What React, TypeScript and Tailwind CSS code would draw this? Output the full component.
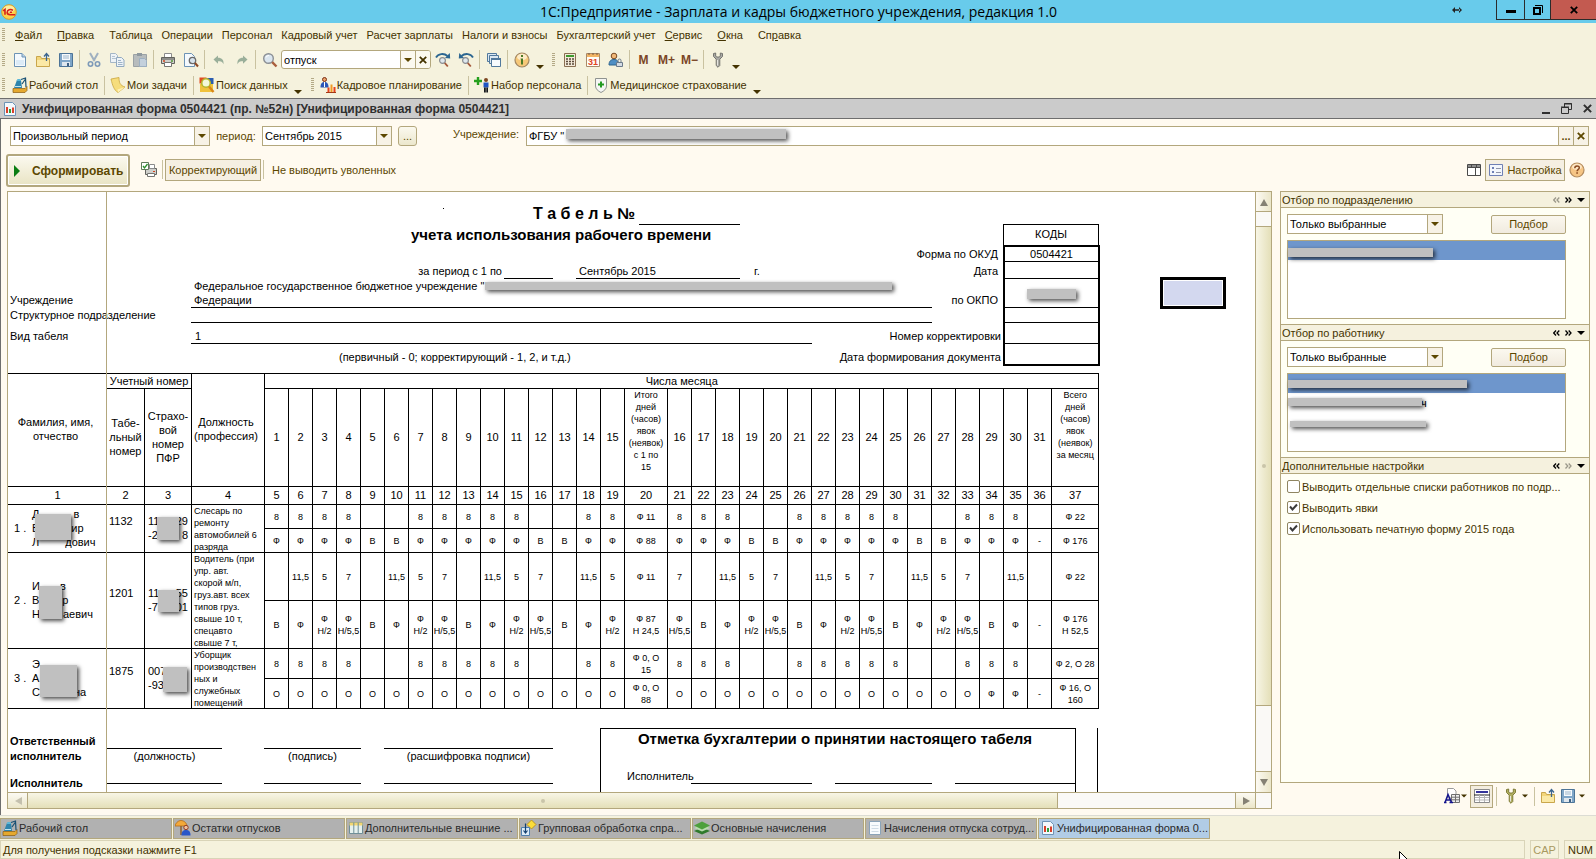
import { Fragment, type ReactNode } from "react";
import clsx from "clsx";

/* ---------- icons ---------- */

function Svg({ children, w = 16, h = 16, box }: { children: ReactNode; w?: number; h?: number; box?: string }) {
    return (
        <svg width={w} height={h} viewBox={box ?? `0 0 ${w} ${h}`} fill="none" className="shrink-0" aria-hidden="true">
            {children}
        </svg>
    );
}

const LogoIcon = () => (
    <Svg>
        <circle cx="8" cy="8" r="7.3" fill="#fbd24a" stroke="#d99a2b" />
        <ellipse cx="8" cy="5" rx="5.5" ry="3.4" fill="#fdeea0" />
        <path d="M2.2 6.8 4 5.4v5.4M12 6.3C9.500 4.600 6.200 5.800 6.200 8.200c0 2 1.500 2.500 3 2.500h5M11 8.200H8.800" stroke="#d6201c" strokeWidth="1.600" />
    </Svg>
);
const NewIcon = () => (
    <Svg>
        <path d="M2.500 1.500h7.500l3.500 3.500v9.500h-11z" fill="#f4f9fd" stroke="#6d93b5" />
        <path d="M4 8h8v5H4z" fill="#dcebf7" />
        <path d="M10 1.500V5h3.500" fill="#b9d2e8" stroke="#6d93b5" />
    </Svg>
);
const OpenIcon = () => (
    <Svg>
        <path d="M1.500 14.500v-10h4l1 2h8v8z" fill="#f3d67a" stroke="#c9a64c" />
        <path d="M2 14v-6h12v6z" fill="#fbe9a6" />
        <path d="M11.500 9V2M9 4.500 11.500 1.500 14 4.500" stroke="#3b6590" strokeWidth="1.300" />
    </Svg>
);
const SaveIcon = () => (
    <Svg>
        <path d="M1.500 1.500h13v13h-13z" fill="#7fa6c8" stroke="#4d7497" />
        <path d="M4 2h8v6H4z" fill="#f5f9fc" />
        <path d="M5 4h6M5 6h6" stroke="#9db6cb" />
        <path d="M4 10h8v4H4z" fill="#dfe7ee" />
        <path d="M9 11h2v3H9z" fill="#3f6183" />
    </Svg>
);
const CutIcon = () => (
    <Svg>
        <path d="m4 1 4.500 8M12 1 7.500 9" stroke="#9fb0c0" strokeWidth="2" />
        <circle cx="4.500" cy="12" r="2.200" stroke="#7e9ab8" strokeWidth="1.600" />
        <circle cx="11.500" cy="12" r="2.200" stroke="#7e9ab8" strokeWidth="1.600" />
    </Svg>
);
const CopyIcon = () => (
    <Svg>
        <path d="M1.500 1.500h5l2 2v7h-7z" fill="#eef3f7" stroke="#a4b6c6" />
        <path d="M3 4.500h3M3 6.500h4" stroke="#b4c4d2" />
        <path d="M7.500 5.500h5l2.500 2.500v6.500H7.500z" fill="#eef3f7" stroke="#91a9bf" />
        <path d="M9 8.500h3M9 10.500h4.500M9 12.500h4.500" stroke="#9db3c8" />
    </Svg>
);
const PasteIcon = () => (
    <Svg>
        <path d="M1.500 2.500h13v12h-13z" fill="#b7bcbd" stroke="#9ba2a5" />
        <path d="M5 1h5v3H5z" fill="#8f999f" />
        <path d="M7.500 6.500h5l2 2v6h-7z" fill="#c3d0dc" stroke="#9cafc1" />
    </Svg>
);
const PrintIcon = () => (
    <Svg>
        <path d="M4.500 1.500h7v4h-7z" fill="#fff" stroke="#8b8b8b" />
        <path d="M1.500 5.500h13v6h-13z" fill="#cfcfcb" stroke="#62625e" />
        <path d="M2 6h12v2H2z" fill="#8e8e8a" />
        <path d="M4.500 10.500h7v4h-7z" fill="#fff" stroke="#767672" />
        <path d="M3 9h2" stroke="#d6441c" strokeWidth="1.400" />
        <path d="M11 9h2" stroke="#4f9a35" strokeWidth="1.400" />
    </Svg>
);
const PreviewIcon = () => (
    <Svg>
        <path d="M1.500 1.500h7l3 3v10h-10z" fill="#f4f9fd" stroke="#6d93b5" />
        <circle cx="9.500" cy="8.500" r="3.200" fill="#d6e2ec" stroke="#6a6a6a" strokeWidth="1.300" />
        <path d="m12 11 3 3.500" stroke="#8f4a26" strokeWidth="2" />
    </Svg>
);
const UndoIcon = ({ flip }: { flip?: boolean }) => (
    <Svg>
        <g transform={flip ? "matrix(-1 0 0 1 16 0)" : undefined}>
            <path d="M2.500 7.500 7 3.500v2.300c4 0 6 2.200 5.500 6.500-1-2.500-2.500-3-5.500-3v2.400z" fill="#9aaf9a" />
        </g>
    </Svg>
);
const LensIcon = () => (
    <Svg>
        <circle cx="6.500" cy="6.500" r="4.800" fill="#dbe6ef" stroke="#8b8f94" strokeWidth="1.400" />
        <path d="M4 5.500a3 3 0 0 1 3-2" stroke="#fff" />
        <path d="m10.200 10.200 4.300 4.300" stroke="#a95e3c" strokeWidth="2.400" />
    </Svg>
);
const FindIcon = ({ flip }: { flip?: boolean }) => (
    <Svg>
        <g transform={flip ? "matrix(-1 0 0 1 16 0)" : undefined}>
            <path d="M1 5.500C3 1.500 9 .8 12.500 4" stroke="#2c6691" strokeWidth="1.800" />
            <path d="m14.800 1 .4 5.500-5.200-.6z" fill="#2c6691" />
        </g>
        <circle cx="7.500" cy="8.500" r="2.900" fill="#dfe8ee" stroke="#8a8d91" strokeWidth="1.200" />
        <path d="m9.800 11 3 3.500" stroke="#a4583a" strokeWidth="1.900" />
    </Svg>
);
const WindowsIcon = () => (
    <Svg>
        <path d="M1.500 1.500h9v8h-9z" fill="#dbe8f2" stroke="#51799d" />
        <path d="M3.500 3.500h9v8h-9z" fill="#dbe8f2" stroke="#51799d" />
        <path d="M5.500 6.500h9v8h-9z" fill="#f7fbfe" stroke="#51799d" />
        <path d="M5 6h10v2H5z" fill="#51799d" />
    </Svg>
);
const InfoIcon = () => (
    <Svg>
        <circle cx="8" cy="8" r="7" fill="#f6c878" stroke="#a18763" strokeWidth="1.200" />
        <ellipse cx="8" cy="5" rx="5" ry="3.300" fill="#fdebc7" />
        <path d="M7 3h2v2H7zM6.500 6.500H9v6H7v-5h-.5z" fill="#4b7a26" />
    </Svg>
);
const CalcIcon = () => (
    <Svg>
        <path d="M2.500 1.500h11v13h-11z" fill="#f3ead9" stroke="#8a6f52" />
        <path d="M4 3h8v2H4z" fill="#3f9a2e" />
        <path d="M4 7h2M7 7h2M10 7h2M4 9.500h2M7 9.500h2M10 9.500h2M4 12h2M7 12h2M10 12h2" stroke="#5b4a3a" strokeWidth="1.300" />
    </Svg>
);
const CalendarIcon = () => (
    <Svg>
        <path d="M1.500 1.500h13v13h-13z" fill="#fffdf8" stroke="#a98a6a" />
        <path d="M2 2h12v3H2z" fill="#f2b566" />
        <path d="M4 1v2M8 1v2M12 1v2" stroke="#7d5a3a" />
        <text x="8" y="13" textAnchor="middle" fontSize="9" fontWeight="700" fill="#e0431d" fontFamily="Liberation Sans">31</text>
    </Svg>
);
const UserIcon = () => (
    <Svg>
        <circle cx="6" cy="4" r="2.800" fill="#f1b878" stroke="#7a4a22" />
        <path d="M1 13c0-4 2-5.500 5-5.500s4.500 1.500 4.500 5.500z" fill="#4f8fc4" stroke="#2f658f" />
        <path d="M8.500 10.500h6v4h-6z" fill="#d5dde5" stroke="#6b7a8a" />
        <path d="M10 10V8.500a1.500 1.500 0 0 1 3 0V10" stroke="#6b7a8a" />
    </Svg>
);
const WrenchIcon = ({ color = "#a9a9a4", edge = "#6c6c66" }: { color?: string; edge?: string }) => (
    <Svg>
        <path d="M3.500 1.500v3L6.200 7.200v6.300l1.800 1.800 1.800-1.800V7.200l2.700-2.700v-3L10.300 1v3l-1 1H6.700l-1-1V1z" fill={color} stroke={edge} strokeWidth=".9" />
        <path d="M7.500 8v5.500" stroke="#e5e5df" />
    </Svg>
);
const DesktopIcon = () => (
    <Svg>
        <path d="M1 11.500h12l2-2v4l-2 2H1z" fill="#e5a92f" stroke="#8a5c11" strokeWidth=".7" />
        <path d="M2 11 5 3h4l1 8z" fill="#2d84ad" />
        <path d="m4.500 4 1-2h3l.5 2z" fill="#5ab7d8" />
        <path d="M9 2.500 13.500 1l.5 9M10 7l3.500-5" stroke="#174f73" strokeWidth="1.200" />
        <path d="M3 9.500h6" stroke="#bfe4ef" />
    </Svg>
);
const NoteIcon = () => (
    <Svg>
        <path d="m1 2 8-1.500c0 5 1 8 6 9.500l-7 5.500C4 13 2.500 8.500 1 2z" fill="#f6dd7c" stroke="#c9a63f" strokeWidth=".8" />
        <path d="m8 15.500-.5-3L15 10z" fill="#fff0b3" />
    </Svg>
);
const DataSearchIcon = () => (
    <Svg>
        <path d="M.5.500h7v6h-7z" fill="#e04a1f" />
        <path d="M7 1h7.500v6H7z" fill="#2a5db0" />
        <path d="M1 7h13v8H1z" fill="#f0c23c" />
        <circle cx="7" cy="6" r="4.300" fill="#f3f8d8" stroke="#b5b62b" strokeWidth="1.600" />
        <path d="m10 9.500 4.500 5.500" stroke="#d98716" strokeWidth="2.400" />
    </Svg>
);
const PlanIcon = () => (
    <Svg>
        <circle cx="4.500" cy="2.500" r="2" fill="#e9a36b" stroke="#7c2c12" />
        <path d="M.5 10.500c0-4 1.500-5.500 4-5.500s4 1.500 4 5.500z" fill="#2a56b8" />
        <path d="M4 5h1v5H4z" fill="#fff" />
        <path d="M7.500 10.500h2V15h-2z" fill="#e8431c" />
        <path d="M10.500 7.500h2V15h-2z" fill="#f09a22" />
        <path d="M13.500 10h2v5h-2z" fill="#e8431c" />
        <path d="M6 15.500h10" stroke="#a33a16" />
    </Svg>
);
const RecruitIcon = () => (
    <Svg>
        <path d="M4 0v8M0 4h8" stroke="#25a01c" strokeWidth="2.400" />
        <circle cx="12" cy="3" r="2" fill="#7c4620" />
        <path d="M9.500 5.500h5v5h-5z" fill="#1e54c4" />
        <path d="M10 10.500h1.800v5H10zM12.300 10.500H14v5h-1.700z" fill="#16181c" />
    </Svg>
);
const ShieldIcon = () => (
    <Svg>
        <path d="M2.500 1.500h11V9c0 3-2.500 5-5.500 6.500C5 14 2.500 12 2.500 9z" fill="#f5f6f4" stroke="#8f9390" />
        <path d="M8 4.500v6M5 7.500h6" stroke="#239a22" strokeWidth="2" />
    </Svg>
);
const ReportIcon = () => (
    <Svg>
        <path d="M2.500 1.500h8l3 3v10h-11z" fill="#f3f8fc" stroke="#6d93b5" />
        <path d="M4 6h2v6H4z" fill="#d9402a" />
        <path d="M7 8h2v4H7z" fill="#2f9e3a" />
        <path d="M10 6.500h2V12h-2z" fill="#d9402a" />
    </Svg>
);
const PrintCheckIcon = () => (
    <Svg>
        <path d="M4.500 6.500h11v6h-11z" fill="#cfcfcb" stroke="#62625e" />
        <path d="M8.500 2.500h5v4h-5z" fill="#fff" stroke="#8b8b8b" />
        <path d="M6.500 11.500h7v3h-7z" fill="#fff" stroke="#767672" />
        <path d="M.5.500h7v7h-7z" fill="#fff" stroke="#5f7a5a" />
        <path d="M2 4l1.500 2L6.500 2" stroke="#2b8f2b" strokeWidth="1.300" />
        <path d="M12 9.500h2" stroke="#d6441c" />
    </Svg>
);
const TableIcon = () => (
    <Svg>
        <path d="M1.500 2.500h13v11h-13z" fill="#fff" stroke="#4a4a4a" />
        <path d="M2 3h12v2H2z" fill="#8d8d8d" />
        <path d="M5.500 2.500v3M10.500 2.500v3M1.500 5.500h13M9.500 5.500v8" stroke="#4a4a4a" />
    </Svg>
);
const SettingsListIcon = () => (
    <Svg>
        <path d="M1.500 2.500h13v11h-13z" fill="#f3f6fc" stroke="#6f80b5" />
        <path d="M4 5h2v2H4zM4 9h2v2H4z" fill="#6f80b5" />
        <path d="M8 6.500h5M8 10.500h5" stroke="#8e93a8" />
    </Svg>
);
const HelpIcon = () => (
    <Svg>
        <circle cx="8" cy="8" r="7" fill="#f6c585" stroke="#b48c5e" strokeWidth="1.200" />
        <ellipse cx="8" cy="4.800" rx="5" ry="3" fill="#fde6c4" />
        <path d="M5.800 6.200c0-3 4.500-2.800 4.500-.4 0 1.700-2.200 1.500-2.200 3.500M7.300 11h1.600" stroke="#8a4b21" strokeWidth="1.500" />
    </Svg>
);
const TypefaceIcon = () => (
    <Svg>
        <path d="M3.500.500h6l2.500 2.500v7h-8.500z" fill="#fff" stroke="#9a9a9a" />
        <path d="M7.500 6.500h8v8h-8z" fill="#efefef" stroke="#6f6f6f" />
        <path d="M7.500 9.200h8M7.500 11.800h8M11.500 6.500v8" stroke="#6f6f6f" />
        <path d="m1 14.500 3-8 3.500 8M2 12h4M0 14.500h2.500M5.500 14.500H9" stroke="#14148c" strokeWidth="1.500" />
    </Svg>
);
const GridIcon = () => (
    <Svg>
        <path d="M.5 1.500h15v13H.5z" fill="#fff" stroke="#8a8a8a" />
        <path d="M2 3h12v2H2z" fill="#34349a" />
        <path d="M0 7h16" stroke="#222" />
        <path d="M1 9.500h14M1 12h14M5.500 7v7M10.500 7v7" stroke="#b5b5b5" />
    </Svg>
);
const VacationIcon = () => (
    <Svg>
        <path d="M0 6C1 2 4 .5 6 .5S11.500 2 12 6z" fill="#f3a93a" stroke="#b06a17" strokeWidth=".8" />
        <path d="M6 6v9" stroke="#8a5a2a" strokeWidth="1.400" />
        <circle cx="11" cy="7.500" r="2.200" fill="#f0c09a" stroke="#8c2f1a" strokeWidth=".9" />
        <path d="M6.500 15.500c0-4 1.500-5.500 4.500-5.500s4.500 1.500 4.500 5.500z" fill="#2a56c8" />
    </Svg>
);
const ColumnsIcon = () => (
    <Svg>
        <path d="M1.500 2.500h13v11h-13z" fill="#e6f1ee" stroke="#6f8f98" />
        <path d="M1.500 2.500h13v3h-13z" fill="#f2d672" />
        <path d="M5.800 2.500v11M10.200 2.500v11" stroke="#6f8f98" />
    </Svg>
);
const BatchIcon = () => (
    <Svg>
        <path d="M10.500 0 15 4.500 10.500 9 6 4.500z" fill="#fbdc3a" stroke="#b48a12" strokeWidth=".8" />
        <path d="M.5 7.500h8v8h-8z" fill="#dcebf7" stroke="#4f7fae" />
        <path d="M4.500 3.500v9M2.500 10.500l2 2.500 2-2.500" stroke="#123f70" strokeWidth="1.200" />
    </Svg>
);
const LayersIcon = () => (
    <Svg>
        <path d="m0 11 8-3.500L16 11l-8 3.500z" fill="#2f7a2c" />
        <path d="m0 8 8-3.500L16 8l-8 3.500z" fill="#b8dcae" />
        <path d="m0 5.500 8-4 8 4-8 4z" fill="#4da03c" />
    </Svg>
);
const DocIcon = () => (
    <Svg>
        <path d="M2.500 1.500h11v13h-11z" fill="#f8fbfd" stroke="#8aa3b8" />
        <path d="M4.500 5.500h7M4.500 8.500h7M4.500 11.500h7" stroke="#cfdbe5" />
    </Svg>
);
const Caret = ({ className = "text-[#443300]" }: { className?: string }) => (
    <svg width="8" height="4" viewBox="0 0 8 4" className={clsx("shrink-0", className)} aria-hidden="true">
        <path d="M0 0h8L4 4z" fill="currentColor" />
    </svg>
);
const Cross = ({ size = 8 }: { size?: number }) => (
    <svg width={size} height={size} viewBox="0 0 8 8" aria-hidden="true">
        <path d="m.8.8 6.400 6.400M7.200.8.800 7.200" stroke="currentColor" strokeWidth="1.800" />
    </svg>
);

/* ---------- toolbar pieces ---------- */

const Grip = () => (
    <span className="mr-[3px] ml-[2px] h-[14px] w-[3px] shrink-0 bg-[repeating-linear-gradient(#b3a986_0_1px,transparent_1px_2px)]" />
);
const Sep = () => <span className="mx-[2px] h-[19px] w-px shrink-0 bg-[#c9c2a0]" />;

function ToolButton({ label, children }: { label: string; children: ReactNode }) {
    return (
        <button type="button" title={label} aria-label={label} className="flex h-5 w-[23px] shrink-0 items-center justify-center">
            {children}
        </button>
    );
}

function More() {
    return (
        <button type="button" aria-label="Еще" className="flex h-5 w-[13px] shrink-0 items-end justify-center pb-px">
            <Caret />
        </button>
    );
}

function Combo({ label, value, className }: { label: string; value: string; className: string }) {
    return (
        <div className={clsx("relative flex h-5 shrink-0 border border-[#b3a77d] bg-white", className)}>
            <select aria-label={label} className="w-full appearance-none bg-white pl-[2px] text-black outline-none">
                <option>{value}</option>
            </select>
            <span className="pointer-events-none flex w-[15px] shrink-0 items-center justify-center border-l border-[#b3a77d] bg-[#f7f2e6]">
                <Caret className="text-[#5c4700]" />
            </span>
        </div>
    );
}

/* ---------- data ---------- */

const menu: { name: string; key?: number }[] = [
    { name: "Файл", key: 0 },
    { name: "Правка", key: 0 },
    { name: "Таблица" },
    { name: "Операции" },
    { name: "Персонал" },
    { name: "Кадровый учет" },
    { name: "Расчет зарплаты" },
    { name: "Налоги и взносы" },
    { name: "Бухгалтерский учет" },
    { name: "Сервис", key: 0 },
    { name: "Окна", key: 0 },
    { name: "Справка", key: 2 },
];

const windows = [
    { name: "Рабочий стол", icon: DesktopIcon },
    { name: "Остатки отпусков", icon: VacationIcon },
    { name: "Дополнительные внешние ...", icon: ColumnsIcon },
    { name: "Групповая обработка спра...", icon: BatchIcon },
    { name: "Основные начисления", icon: LayersIcon },
    { name: "Начисления отпуска сотруд...", icon: DocIcon },
    { name: "Унифицированная форма 0...", icon: ReportIcon, active: true },
];

const days = Array.from({ length: 31 }, (_, i) => i + 1);
const isOff = (d: number) => [5, 6, 12, 13, 19, 20, 26, 27].includes(d);

const shiftTop = ["", "11,5", "5", "7"];
const shiftBottom = ["В", "Ф", "Ф\nН/2", "Ф\nН/5,5"];

const employees = [
    {
        no: 1,
        name: [["Д", "в"], ["В", "ир"], ["Л", "дович"]],
        nameGap: ["w-[34px]", "w-[32px]", "w-[26px]"],
        nameMask: "left-[27px] top-[9px] h-[26px] w-[36px]",
        tab: "1132",
        snils: [["11", "29"], ["-2", "8"]],
        snilsMask: "left-[12px] top-[12px] h-[23px] w-[22px]",
        job: "Слесарь по\nремонту\nавтомобилей 6\nразряда",
        height: "h-6",
        clip: "h-[47px]",
        top: days.map((d) => (isOff(d) || d === 31 ? "" : "8")),
        bottom: days.map((d) => (d === 31 ? "-" : isOff(d) ? "В" : "Ф")),
        half: ["Ф 11", "Ф 88"],
        total: ["Ф 22", "Ф 176"],
    },
    {
        no: 2,
        name: [["И", "в"], ["В", "р"], ["Н", "аевич"]],
        nameGap: ["w-[20px]", "w-[23px]", "w-[23px]"],
        nameMask: "left-[31px] top-[33px] h-[33px] w-[23px]",
        tab: "1201",
        snils: [["11", "55"], ["-7", "01"]],
        snilsMask: "left-[13px] top-[37px] h-[22px] w-[21px]",
        job: "Водитель (при\nупр. авт.\nскорой м/п,\nгруз.авт. всех\nтипов груз.\nсвыше 10 т,\nспецавто\nсвыше 7 т,",
        height: "h-12",
        clip: "h-[95px]",
        top: days.map((d) => (d === 31 ? "" : shiftTop[(d - 1) % 4])),
        bottom: days.map((d) => (d === 31 ? "-" : shiftBottom[(d - 1) % 4])),
        half: ["Ф 11", "Ф 87\nН 24,5"],
        total: ["Ф 22", "Ф 176\nН 52,5"],
    },
    {
        no: 3,
        name: [["Э", ""], ["А", ""], ["С", "на"]],
        nameGap: ["w-[23px]", "w-[23px]", "w-[34px]"],
        nameMask: "left-[32px] top-[16px] h-[32px] w-[37px]",
        tab: "1875",
        snils: [["007", ""], ["-93", ""]],
        snilsMask: "left-[18px] top-[18px] h-[25px] w-[24px]",
        job: "Уборщик\nпроизводствен\nных и\nслужебных\nпомещений",
        height: "h-[30px]",
        clip: "h-[59px]",
        top: days.map((d) => (isOff(d) || d === 31 ? "" : "8")),
        bottom: days.map((d) => (d === 31 ? "-" : d > 28 ? "Ф" : "О")),
        half: ["Ф 0, О\n15", "Ф 0, О\n88"],
        total: ["Ф 2, О 28", "Ф 16, О\n160"],
    },
];

/* ---------- sheet ---------- */

const Mask = ({ className }: { className: string }) => (
    <span className={clsx("absolute bg-[#c0c0c0] shadow-[2px_2px_4px_rgba(0,0,0,0.7)]", className)} />
);

const line = "border-r border-b border-black text-center font-normal";
const cell = clsx(line, "p-0 pb-[2px]");

function SheetHeader() {
    return (
        <div className="flex h-[181px]">
            <div className="w-[995px]">
                <div className="flex h-[33px]">
                    <h1 className="w-[627px] pt-[13px] text-right text-[16px] leading-[18px] font-bold">Т а б е л ь №</h1>
                    <div className="ml-1 w-[101px] border-b border-black" />
                </div>
                <h2 className="h-[21px] pl-[403px] text-[15px] leading-[20px] font-bold">учета использования рабочего времени</h2>
                <div className="h-4 pr-[5px] text-right leading-[16px]">Форма по ОКУД</div>
                <div className="flex h-[17px] leading-[19px]">
                    <span className="w-[496px] pr-[2px] text-right">за период с 1 по</span>
                    <span className="w-[49px] border-b border-black" />
                    <span className="ml-[23px] w-[164px] border-b border-black pl-[3px]">Сентябрь 2015</span>
                    <span className="ml-[14px]">г.</span>
                    <span className="ml-auto pr-[5px]">Дата</span>
                </div>
                <div className="flex h-[29px] items-end leading-[14px]">
                    <span className="w-[183px] pb-px pl-[2px]">Учреждение</span>
                    <div className="relative w-[741px] border-b border-black pl-[3px]">
                        Федеральное государственное бюджетное учреждение "
                        <br />
                        Федерации
                        <Mask className="top-[3px] left-[294px] h-[8px] w-[407px]" />
                    </div>
                    <span className="ml-auto pr-[5px] pb-px">по ОКПО</span>
                </div>
                <div className="flex h-[15px] leading-[14px]">
                    <span className="w-[183px] pl-[2px] whitespace-nowrap">Структурное подразделение</span>
                    <span className="w-[741px] border-b border-black" />
                </div>
                <div className="flex h-[21px] items-end leading-[14px]">
                    <span className="w-[183px] pb-px pl-[2px]">Вид табеля</span>
                    <span className="w-[621px] border-b border-black pl-[4px]">1</span>
                    <span className="ml-auto pr-[2px] pb-px">Номер корректировки</span>
                </div>
                <div className="flex h-[22px] justify-between pr-[2px] pl-[331px] leading-[27px]">
                    <span>(первичный - 0; корректирующий - 1, 2, и т.д.)</span>
                    <span>Дата формирования документа</span>
                </div>
            </div>
            <div className="w-[97px] pt-8 text-center">
                <div className="mr-px h-[21px] border-x border-t border-black leading-[19px]">КОДЫ</div>
                <div className="border-2 border-black">
                    <div className="h-[15px] border-b border-black leading-[14px]">0504421</div>
                    <div className="h-[17px] border-b border-black" />
                    <div className="relative h-[29px] border-b border-black">
                        <Mask className="top-[10px] left-[22px] h-[10px] w-[49px]" />
                    </div>
                    <div className="h-[15px] border-b border-black" />
                    <div className="h-[21px] border-b border-black" />
                    <div className="h-5" />
                </div>
            </div>
        </div>
    );
}

function DayCells({ values, half, total, height }: { values: string[]; half: string; total: string; height: string }) {
    const small = clsx(line, "p-0 text-[9px] leading-[12px] whitespace-pre", height);
    return (
        <>
            {values.map((v, i) => (
                <Fragment key={i}>
                    <td className={small}>{v}</td>
                    {i === 14 && <td className={small}>{half}</td>}
                </Fragment>
            ))}
            <td className={small}>{total}</td>
        </>
    );
}

function Timesheet() {
    const note = clsx(line, "p-0 align-top text-[9px] leading-[12px] whitespace-pre");
    return (
        <table className="w-[1091px] table-fixed border-separate border-spacing-0 border-t border-black leading-[14px]">
            <colgroup>
                <col className="w-[99px]" />
                <col className="w-[38px]" />
                <col className="w-[47px]" />
                <col className="w-[73px]" />
                {days.map((d) => (
                    <Fragment key={d}>
                        <col className="w-6" />
                        {d === 15 && <col className="w-[43px]" />}
                    </Fragment>
                ))}
                <col className="w-[47px]" />
            </colgroup>
            <thead>
                <tr>
                    <th rowSpan={2} className="border-b border-black p-0 pr-[4px] pb-[2px] font-normal">Фамилия, имя,<br />отчество</th>
                    <th colSpan={2} className={clsx(line, "h-[15px] p-0 whitespace-nowrap")}>Учетный номер</th>
                    <th rowSpan={2} className={clsx(cell, "pr-[4px]")}>Должность (профессия)</th>
                    <th colSpan={33} className={clsx(line, "p-0")}>Числа месяца</th>
                </tr>
                <tr>
                    <th className={clsx(cell, "h-[98px]")}>Табе-<br />льный<br />номер</th>
                    <th className={cell}>Страхо-<br />вой<br />номер<br />ПФР</th>
                    {days.map((d) => (
                        <Fragment key={d}>
                            <th className={cell}>{d}</th>
                            {d === 15 && <th className={note}>{"Итого\nдней\n(часов)\nявок\n(неявок)\nс 1 по\n15"}</th>}
                        </Fragment>
                    ))}
                    <th className={note}>{"Всего\nдней\n(часов)\nявок\n(неявок)\nза месяц"}</th>
                </tr>
                <tr>
                    {Array.from({ length: 37 }, (_, i) => (
                        <th key={i} className={clsx("h-[18px] border-b border-black p-0 pb-[2px] font-normal", i > 0 && "border-r")}>{i + 1}</th>
                    ))}
                </tr>
            </thead>
            <tbody>
                {employees.map((e) => (
                    <Fragment key={e.no}>
                        <tr>
                            <td rowSpan={2} className="relative border-b border-black p-0 pb-[2px]">
                                <div className="flex items-center pl-[6px]">
                                    <span className="w-[18px]">{e.no} .</span>
                                    <div>
                                        {e.name.map(([start, end], i) => (
                                            <div key={i} className="flex">
                                                {start}<span className={e.nameGap[i]} />{end}
                                            </div>
                                        ))}
                                    </div>
                                </div>
                                <Mask className={e.nameMask} />
                            </td>
                            <td rowSpan={2} className="border-r border-b border-black p-0 pb-4 pl-[2px]">{e.tab}</td>
                            <td rowSpan={2} className="relative border-r border-b border-black px-[3px] pt-0 pb-[2px]">
                                {e.snils.map(([start, end]) => (
                                    <div key={start} className="flex justify-between"><span>{start}</span><span>{end}</span></div>
                                ))}
                                <Mask className={e.snilsMask} />
                            </td>
                            <td rowSpan={2} className="border-r border-b border-black p-0 pl-[2px] text-[9px] leading-[12px]">
                                <div className={clsx("whitespace-pre", e.clip)}>{e.job}</div>
                            </td>
                            <DayCells values={e.top} half={e.half[0]} total={e.total[0]} height={e.height} />
                        </tr>
                        <tr>
                            <DayCells values={e.bottom} half={e.half[1]} total={e.total[1]} height={e.height} />
                        </tr>
                    </Fragment>
                ))}
            </tbody>
        </table>
    );
}

function SheetFooter() {
    return (
        <div className="flex">
            <div className="w-[592px]">
                <div className="flex h-10 items-end">
                    <b className="w-[99px] pb-px pl-[2px]">Ответственный</b>
                    <span className="w-[115px] border-b border-black" />
                    <span className="ml-[42px] w-[97px] border-b border-black" />
                    <span className="ml-[23px] w-[169px] border-b border-black" />
                </div>
                <div className="flex h-[15px] text-center leading-[15px]">
                    <b className="w-[99px] pl-[2px] text-left">исполнитель</b>
                    <span className="w-[115px]">(должность)</span>
                    <span className="ml-[42px] w-[97px]">(подпись)</span>
                    <span className="ml-[23px] w-[169px]">(расшифровка подписи)</span>
                </div>
                <div className="flex items-start leading-[14px]">
                    <b className="w-[99px] pt-3 pl-[2px]">Исполнитель</b>
                    <span className="h-5 w-[115px] border-b border-black" />
                    <span className="ml-[42px] h-5 w-[97px] border-b border-black" />
                    <span className="ml-[23px] h-5 w-[169px] border-b border-black" />
                </div>
            </div>
            <div className="mt-[19px] h-24 w-[476px] border border-black">
                <h2 className="pr-[6px] text-center text-[15px] leading-[20px] font-bold">Отметка бухгалтерии о принятии настоящего табеля</h2>
                <div className="flex h-[35px] items-end pl-[26px]">
                    <span className="mb-px w-[64px] leading-[14px]">Исполнитель</span>
                    <span className="w-[121px] border-b border-black" />
                    <span className="ml-[23px] w-[97px] border-b border-black" />
                    <span className="ml-[23px] w-[120px] border-b border-black" />
                </div>
            </div>
            <div className="mt-[19px] ml-[21px] h-24 border-l border-black" />
        </div>
    );
}

function ScrollArrow({ dir, muted }: { dir: "up" | "down" | "left" | "right"; muted?: boolean }) {
    const path = { up: "M4 1 8 8H0z", down: "M4 8 0 1h8z", left: "M1 4 8 0v8z", right: "M8 4 1 0v8z" }[dir];
    return (
        <button
            type="button"
            aria-label={`scroll ${dir}`}
            className={clsx(
                "flex shrink-0 items-center justify-center border-[#b3a77d] from-[#fcfaf3] to-[#ebe6c9]",
                dir === "up" && "h-[20px] border-b bg-linear-to-r",
                dir === "down" && "h-[21px] border-t bg-linear-to-r",
                dir === "left" && "w-[20px] border-r bg-linear-to-b",
                dir === "right" && "w-[21px] border-x bg-linear-to-b",
            )}
        >
            <svg width="8" height="8" viewBox="0 0 8 8" aria-hidden="true"><path d={path} fill={muted ? "#c4c0ae" : "#858174"} /></svg>
        </button>
    );
}

function Sheet() {
    return (
        <section className="flex min-w-0 flex-1 flex-col border border-[#b3a77d] bg-white text-black">
            <div className="flex min-h-0 flex-1">
                <div className="relative min-w-0 flex-1 overflow-hidden">
                    <div className="w-[1240px]">
                        <SheetHeader />
                        <Timesheet />
                        <SheetFooter />
                    </div>
                    <span className="absolute inset-y-0 left-[98px] w-px bg-[#b3a77d]" />
                    <span className="absolute top-4 left-[435px] size-px bg-black" />
                    <span className="absolute top-[85px] left-[1152px] h-8 w-[66px] border-[3px] border-black bg-[#d3d8ef] shadow-[inset_0_0_0_1px_#fff]" />
                </div>
                <div className="flex w-4 shrink-0 flex-col border-l border-[#b3a77d] bg-[#faf9f6]">
                    <ScrollArrow dir="up" />
                    <div className="mt-[14px] flex flex-1 items-center justify-center border-y border-[#b3a77d] bg-linear-to-r from-[#f8f6e6] to-[#e4dfb8]">
                        <span className="size-1 rounded-full bg-[#c9c5a9]" />
                    </div>
                    <div className="h-[65px]" />
                    <ScrollArrow dir="down" />
                </div>
            </div>
            <div className="flex h-4 shrink-0 border-t border-[#b3a77d] bg-[#faf9f6]">
                <ScrollArrow dir="left" muted />
                <div className="flex flex-1 items-center justify-center border-r border-[#b3a77d] bg-linear-to-b from-[#f8f6e6] to-[#e4dfb8]">
                    <span className="size-1 rounded-full bg-[#c9c5a9]" />
                </div>
                <div className="w-[177px]" />
                <ScrollArrow dir="right" />
                <div className="w-[15px]" />
            </div>
        </section>
    );
}

/* ---------- side panel ---------- */

const Chevrons = ({ flip, muted }: { flip?: boolean; muted?: boolean }) => (
    <svg width="7" height="6" viewBox="0 0 7 6" aria-hidden="true">
        <path d={flip ? "m.5.5 2.300 2.500L.5 5.500M3.700.5 6 3 3.700 5.500" : "M3 .5.700 3 3 5.500M6.300.5 4 3l2.300 2.500"} stroke={muted ? "#9b988a" : "#000"} strokeWidth="1.300" fill="none" />
    </svg>
);

function PanelTitle({ title, first, last }: { title: string; first?: boolean; last?: boolean }) {
    return (
        <div className="flex h-4 items-center justify-between border-b border-[#b3a77d] bg-[#f5f1de] pr-1 pl-px">
            <span className="text-[#443300]">{title}</span>
            <span className="flex items-center gap-[5px]">
                <button type="button" aria-label="Свернуть"><Chevrons muted={first} /></button>
                <button type="button" aria-label="Развернуть"><Chevrons flip muted={last} /></button>
                <button type="button" aria-label="Меню"><Caret className="text-black" /></button>
            </span>
        </div>
    );
}

function FilterBlock({ title, first, children }: { title: string; first?: boolean; children: ReactNode }) {
    return (
        <div className="border-b border-[#b3a77d]">
            <PanelTitle title={title} first={first} />
            <div className="flex items-center justify-between pt-[6px] pr-[23px] pl-[6px]">
                <Combo label={title} value="Только выбранные" className="w-[156px]" />
                <button type="button" className="h-[19px] w-[75px] rounded-[2px] border border-[#b3a77d] bg-linear-to-b from-[#fbf8ef] to-[#f1ebdf] text-[#5c4700]">
                    Подбор
                </button>
            </div>
            <div className="mt-[6px] mr-[23px] mb-[5px] ml-[6px] h-[79px] border border-[#b3a77d] bg-white">{children}</div>
        </div>
    );
}

function Check({ label, on }: { label: string; on?: boolean }) {
    return (
        <label className="flex h-[21px] items-center gap-[2px] text-[#443300]">
            <span className="relative flex">
                <input type="checkbox" defaultChecked={on} className="peer size-[13px] appearance-none rounded-[2px] border border-[#8f8561] bg-white" />
                <svg width="13" height="13" viewBox="0 0 13 13" className="pointer-events-none absolute inset-0 hidden peer-checked:block" aria-hidden="true">
                    <path d="m3 5.500 2.500 3L10 3.500" stroke="#3b3b3b" strokeWidth="2" fill="none" />
                </svg>
            </span>
            {label}
        </label>
    );
}

function SidePanel() {
    return (
        <aside className="flex w-[310px] shrink-0 flex-col">
            <div className="flex-1 border border-[#b3a77d] bg-[#fffff5]">
                <FilterBlock title="Отбор по подразделению" first>
                    <div className="relative h-[19px] bg-[#6e96cc]">
                        <Mask className="top-[7px] left-0 h-[9px] w-[145px]" />
                    </div>
                </FilterBlock>
                <FilterBlock title="Отбор по работнику">
                    <div className="relative h-[19px] bg-[#6e96cc]">
                        <Mask className="top-[6px] left-0 h-2 w-[179px]" />
                    </div>
                    <div className="relative h-[19px]">
                        <span className="block pl-[133px] leading-[20px]">ч</span>
                        <Mask className="top-[5px] left-0 h-2 w-[134px]" />
                    </div>
                    <div className="relative h-[19px]">
                        <Mask className="top-[9px] left-[2px] h-[6px] w-[136px]" />
                    </div>
                </FilterBlock>
                <PanelTitle title="Дополнительные настройки" last />
                <div className="px-[6px] pt-[2px]">
                    <Check label="Выводить отдельные списки работников по подр..." />
                    <Check label="Выводить явки" on />
                    <Check label="Использовать печатную форму 2015 года" on />
                </div>
            </div>
            <div className="flex h-[26px] items-center justify-end gap-px pr-1">
                <button type="button" aria-label="Шрифт" className="flex h-5 items-center gap-px px-[2px]"><TypefaceIcon /><Caret className="w-[6px] text-[#443300]" /></button>
                <button type="button" aria-label="Таблица" className="flex h-[23px] w-[23px] items-center justify-center border border-[#b3a77d] bg-[#f3edde]"><GridIcon /></button>
                <Sep />
                <button type="button" aria-label="Сервис" className="flex h-5 items-center gap-[3px] px-[3px]"><WrenchIcon color="#b0ad62" edge="#77742f" /><Caret className="w-[6px] text-[#443300]" /></button>
                <Sep />
                <button type="button" aria-label="Открыть" className="flex h-5 w-5 items-center justify-center"><OpenIcon /></button>
                <button type="button" aria-label="Сохранить" className="flex h-5 items-center gap-[3px] px-px"><SaveIcon /><Caret className="w-[6px] text-[#443300]" /></button>
            </div>
        </aside>
    );
}

/* ---------- window ---------- */

function TitleBar() {
    return (
        <header className="relative flex h-[23px] shrink-0 items-center bg-[#68cbeb]">
            <span className="pl-px"><LogoIcon /></span>
            <span className="flex-1 pr-4 text-center font-['Open_Sans','Noto_Sans',sans-serif] text-[14px] leading-[23px] text-black">
                1С:Предприятие - Зарплата и кадры бюджетного учреждения, редакция 1.0
            </span>
            <div className="absolute top-0 right-0 flex items-start">
                <svg width="10" height="6" viewBox="0 0 10 6" className="mt-[7px] mr-[34px]" aria-hidden="true">
                    <path d="M0 3 3 0v6zM10 3 7 0v6zM2 2.200h6v1.600H2z" fill="#222" />
                </svg>
                <button type="button" aria-label="Свернуть" className="flex h-5 w-[28px] items-center justify-center border-b border-l border-[#2b2b2b]">
                    <span className="mt-1 h-[3px] w-[10px] bg-black" />
                </button>
                <button type="button" aria-label="Восстановить" className="flex h-5 w-[26px] items-center justify-center border-b border-l border-[#2b2b2b]">
                    <svg width="10" height="10" viewBox="0 0 10 10" fill="none" stroke="#000" aria-hidden="true"><path d="M1 3h6v6H1z" strokeWidth="2" /><path d="M2 .5h7.500V8" /></svg>
                </button>
                <button type="button" aria-label="Закрыть" className="flex h-5 w-[46px] items-center justify-center border-b border-l border-[#2b2b2b] bg-[#c35a50] text-black">
                    <Cross />
                </button>
            </div>
        </header>
    );
}

function LinkButton({ label, children }: { label: string; children: ReactNode }) {
    return (
        <button type="button" className="flex h-5 shrink-0 items-center gap-px pr-1 pl-[3px] whitespace-nowrap">
            {children}
            {label}
        </button>
    );
}

function Toolbars() {
    return (
        <div className="shrink-0 bg-[#f5f2dd] text-[#443300]">
            <nav className="flex h-6 items-center">
                <Grip />
                <span className="w-[2px]" />
                {menu.map(({ name, key }) => (
                    <a key={name} href="#" className={clsx("pl-[5px] whitespace-nowrap", key === undefined ? "pr-1" : "pr-[10px]")}>
                        {key === undefined ? name : (
                            <>{name.slice(0, key)}<u>{name[key]}</u>{name.slice(key + 1)}</>
                        )}
                    </a>
                ))}
            </nav>
            <div className="flex h-[25px] items-center">
                <Grip />
                <ToolButton label="Новый"><NewIcon /></ToolButton>
                <ToolButton label="Открыть"><OpenIcon /></ToolButton>
                <ToolButton label="Сохранить"><SaveIcon /></ToolButton>
                <Sep />
                <ToolButton label="Вырезать"><CutIcon /></ToolButton>
                <ToolButton label="Копировать"><CopyIcon /></ToolButton>
                <ToolButton label="Вставить"><PasteIcon /></ToolButton>
                <Sep />
                <ToolButton label="Печать"><PrintIcon /></ToolButton>
                <ToolButton label="Просмотр"><PreviewIcon /></ToolButton>
                <Sep />
                <ToolButton label="Отменить"><UndoIcon /></ToolButton>
                <ToolButton label="Вернуть"><UndoIcon flip /></ToolButton>
                <Sep />
                <ToolButton label="Найти"><LensIcon /></ToolButton>
                <div className="flex h-[19px] w-[150px] overflow-hidden rounded-[3px] border border-[#b3a77d] bg-white">
                    <input aria-label="Поиск" defaultValue="отпуск" className="min-w-0 flex-1 pl-[2px] text-black outline-none" />
                    <button type="button" aria-label="История" className="flex w-[15px] items-center justify-center border-l border-[#b3a77d] bg-[#fbf9ef]"><Caret className="text-[#5c4700]" /></button>
                    <button type="button" aria-label="Очистить" className="flex w-[15px] items-center justify-center border-l border-[#b3a77d] bg-[#fbf9ef]"><Cross /></button>
                </div>
                <ToolButton label="Найти далее"><FindIcon /></ToolButton>
                <ToolButton label="Найти назад"><FindIcon flip /></ToolButton>
                <Sep />
                <ToolButton label="Окна"><WindowsIcon /></ToolButton>
                <Sep />
                <ToolButton label="Справка"><InfoIcon /></ToolButton>
                <More />
                <span className="w-1" />
                <Grip />
                <ToolButton label="Калькулятор"><CalcIcon /></ToolButton>
                <ToolButton label="Календарь"><CalendarIcon /></ToolButton>
                <ToolButton label="Пользователь"><UserIcon /></ToolButton>
                <Sep />
                {["M", "M+", "M−"].map((m) => (
                    <button key={m} type="button" className="w-[23px] text-[12px] font-bold text-[#7a4526]">{m}</button>
                ))}
                <Sep />
                <ToolButton label="Сервис"><WrenchIcon /></ToolButton>
                <More />
            </div>
            <div className="flex h-[26px] items-center">
                <Grip />
                <span className="w-px" />
                <LinkButton label="Рабочий стол"><DesktopIcon /></LinkButton>
                <Sep />
                <LinkButton label="Мои задачи"><NoteIcon /></LinkButton>
                <Sep />
                <LinkButton label="Поиск данных"><DataSearchIcon /></LinkButton>
                <More />
                <span className="w-1" />
                <Grip />
                <LinkButton label="Кадровое планирование"><PlanIcon /></LinkButton>
                <Sep />
                <LinkButton label="Набор персонала"><RecruitIcon /></LinkButton>
                <Sep />
                <LinkButton label="Медицинское страхование"><ShieldIcon /></LinkButton>
                <More />
            </div>
        </div>
    );
}

function FormHeader() {
    return (
        <>
            <div className="flex items-center pt-[7px] pr-[7px] pl-[9px] text-[#5c4700]">
                <Combo label="Вид периода" value="Произвольный период" className="w-[200px]" />
                <span className="w-[52px] text-center">период:</span>
                <Combo label="Период" value="Сентябрь 2015" className="w-[130px]" />
                <button type="button" className="ml-[6px] h-5 w-[19px] rounded-[3px] border border-[#b3a77d] bg-linear-to-b from-[#fbf9ef] to-[#ece7cd]">...</button>
                <label htmlFor="org" className="mb-1 ml-9 w-[73px]">Учреждение:</label>
                <div className="relative flex h-5 flex-1 border border-[#b3a77d] bg-white">
                    <input id="org" defaultValue="ФГБУ &quot;" className="min-w-0 flex-1 pl-[2px] text-black outline-none" />
                    <Mask className="top-[2px] left-[39px] h-[10px] w-[220px]" />
                    <button type="button" aria-label="Выбрать" className="w-[15px] border-l border-[#b3a77d] bg-[#f7f2e6] font-bold">...</button>
                    <button type="button" aria-label="Очистить" className="flex w-[15px] items-center justify-center border-l border-[#b3a77d] bg-[#f7f2e6]"><Cross /></button>
                </div>
            </div>
            <div className="flex h-[43px] items-center pr-[8px] pl-[5px] text-[#5c4700]">
                <button type="button" className="mt-[6px] flex h-[33px] w-[124px] items-center rounded-[3px] border-2 border-[#b3a77d] bg-linear-to-b from-[#fbf9ef] to-[#e9e4c4] pl-[6px] text-[12px] font-bold shadow-[inset_0_0_0_1px_#fff]">
                    <svg width="6" height="12" viewBox="0 0 6 12" className="mr-3" aria-hidden="true"><path d="M0 0v12l6-6z" fill="#0a7d12" /></svg>
                    Сформировать
                </button>
                <span className="mt-1 ml-[7px] flex items-center">
                    <ToolButton label="Печать"><PrintCheckIcon /></ToolButton>
                    <Sep />
                    <button type="button" className="h-[22px] w-24 border border-[#b3a77d] bg-[#f5efe2]">Корректирующий</button>
                    <Sep />
                    <button type="button" className="pl-[6px]">Не выводить уволенных</button>
                </span>
                <span className="mt-1 ml-auto flex items-center">
                    <ToolButton label="Таблица"><TableIcon /></ToolButton>
                    <button type="button" className="flex h-[22px] w-20 items-center justify-center gap-[3px] border border-[#b3a77d] bg-[#f5efe2]"><SettingsListIcon />Настройка</button>
                    <ToolButton label="Справка"><HelpIcon /></ToolButton>
                </span>
            </div>
        </>
    );
}

export default function App() {
    return (
        <div className="relative flex h-screen flex-col overflow-hidden bg-[#f5f2dd] font-['Liberation_Sans',Arial,sans-serif] text-[11px] leading-[14px]">
            <TitleBar />
            <Toolbars />
            <div className="flex h-[21px] shrink-0 items-center border-y border-[#6e6e6e] bg-[#cbcbcb] pr-1 pl-[2px] text-[#2f2f2f]">
                <ReportIcon />
                <span className="flex-1 pl-1 text-[12px] font-bold">Унифицированная форма 0504421 (пр. №52н) [Унифицированная форма 0504421]</span>
                <span className="flex items-center gap-[11px]">
                    <button type="button" aria-label="Свернуть" className="h-[10px] w-2 border-b-2 border-[#2f2f2f]" />
                    <button type="button" aria-label="Восстановить">
                        <svg width="11" height="11" viewBox="0 0 11 11" fill="none" stroke="currentColor" aria-hidden="true"><path d="M.5 4.500h7v6h-7zM0 4h8M3.500 4V.5h7v6H8M3 1h8" /></svg>
                    </button>
                    <button type="button" aria-label="Закрыть"><Cross size={9} /></button>
                </span>
            </div>
            <main className="flex min-h-0 flex-1 flex-col border-l border-[#6e6e6e] bg-[#fffaf0]">
                <FormHeader />
                <div className="mt-[2px] flex min-h-0 flex-1 gap-2 pr-[6px] pb-[6px] pl-[6px]">
                    <Sheet />
                    <SidePanel />
                </div>
            </main>
            <nav className="flex shrink-0 gap-px border-t border-[#dcdcd4] pt-[2px] pb-px">
                {windows.map((w) => (
                    <button
                        key={w.name}
                        type="button"
                        className={clsx(
                            "flex h-[21px] w-[172px] items-center gap-px overflow-hidden border border-[#b3a77d] pb-[2px] pl-px whitespace-nowrap text-[#2a2a2a]",
                            w.active ? "bg-[#b1cce6]" : "bg-[#b1b1b1]",
                        )}
                    >
                        <w.icon />
                        {w.name}
                    </button>
                ))}
            </nav>
            <footer className="relative flex h-[19px] shrink-0 gap-[5px] leading-[18px] text-[#443300]">
                <span className="flex-1 border border-[#d9d4b8] pl-[2px]">Для получения подсказки нажмите F1</span>
                <span className="w-[29px] border border-[#d9d4b8] text-center text-[#a8995f]">CAP</span>
                <span className="w-[32px] border border-r-0 border-[#d9d4b8] text-center">NUM</span>
                <svg width="12" height="19" viewBox="0 0 12 19" className="absolute top-[11px] right-[185px]" aria-hidden="true">
                    <path d="M.5.500v15l3.500-3.500 2.500 6 2.500-1-2.500-5.500h5z" fill="#fff" stroke="#000" />
                </svg>
            </footer>
        </div>
    );
}
